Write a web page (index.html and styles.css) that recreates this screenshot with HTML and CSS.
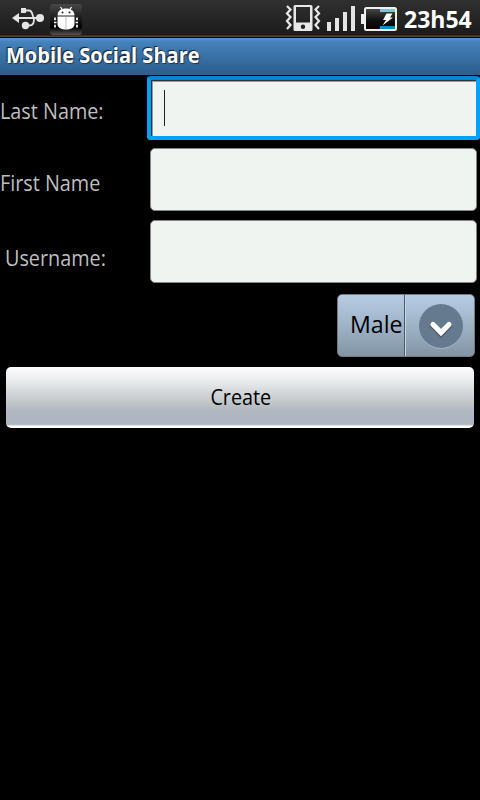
FILE: index.html
```html
<!DOCTYPE html>
<html lang="en">
<head>
<meta charset="utf-8">
<title>Mobile Social Share</title>
<link rel="stylesheet" href="styles.css">
</head>
<body>
<header class="status">
  <svg class="usb" width="34" height="26" viewBox="0 0 34 26" fill="#e4e4e4"><path d="M1 12l7-5v4h18v2H8v4z"/><circle cx="29" cy="12" r="4"/><path d="M10 2h5v5h-5z"/><circle cx="14.500" cy="19.500" r="3.700"/><path d="M14 4.500h4c4 0 3 6 5 7.500M15 19.500h3c5 0 5-4 5-7.500" fill="none" stroke="#e4e4e4" stroke-width="1.800"/></svg>
  <span class="debug"><svg width="32" height="31" viewBox="0 0 32 31" fill="#fff"><path d="M7.500 11.500C7.500 7 11 4.500 16 4.500s8.500 2.500 8.500 7z"/><path d="M10.500 3l2 3M21.500 3l-2 3" stroke="#fff" stroke-width="1.300"/><circle cx="12.500" cy="8.500" r="1" fill="#222"/><circle cx="19.500" cy="8.500" r="1" fill="#222"/><path d="M7.500 12.500h17V20c0 4-4 5.500-8.500 5.500S7.500 24 7.500 20z"/><path d="M16 13v12" stroke="#c0c0c0"/><path d="M5.800 15.500H5V13.500M6.500 18.500H4M5.800 21.500H5V23.500M26.200 15.500H27V13.500M25.500 18.500H28M26.200 21.500H27V23.500" fill="none" stroke="#fff" stroke-width="1.700"/></svg></span>
  <svg class="vibrate" width="36" height="28" viewBox="0 0 36 28"><path d="M2 2l3.500 3.500L2 9.500 5.500 13 2 17l3.500 4L2 25M34 2l-3.500 3.500L34 9.500 30.500 13l3.500 4-3.500 4 3.500 4" fill="none" stroke="#e8e8e8" stroke-width="2.200"/><path fill-rule="evenodd" fill="#e8e8e8" d="M10 1h16q1.500 0 1.500 1.500v23q0 1.500-1.500 1.500H10q-1.500 0-1.500-1.500v-23Q8.500 1 10 1zm1 2v15.500h14V3z"/><circle cx="18" cy="22.800" r="2.200" fill="#222"/></svg>
  <svg class="signal" width="29" height="26" viewBox="0 0 29 26" fill="#e4e4e4"><path d="M0 17h4v9H0zM8 13h4v13H8zM16 7h4v19h-4zM24 1h4v25h-4z"/></svg>
  <svg class="battery" width="37" height="25" viewBox="0 0 37 25"><defs><linearGradient id="g" x2="0" y2="1"><stop stop-color="#4b4b4b"/><stop offset=".55" stop-color="#111"/><stop offset="1" stop-color="#000"/></linearGradient></defs><rect x="4" y="1" width="31" height="22" rx="1.500" fill="url(#g)" stroke="#eee" stroke-width="2"/><path fill="#eee" d="M0 7h4v10H0z"/><path fill="#7cc3e6" d="M19 2h15v3H19z"/><path fill="#088bc8" d="M19 19h15v3H19z"/><path fill="#fff" d="M25.500 6.500h6l-2.500 4h3L21.500 18.500l3.500-5.500h-3z"/></svg>
  <span class="clock">23h54</span>
</header>
<h1 class="title"><span>Mobile Social Share</span></h1>
<main>
  <div class="row row-last"><label for="last"><span>Last Name:</span></label><div class="field focused"><i class="caret"></i><input id="last" type="text"></div></div>
  <div class="row row-first"><label for="first"><span>First Name</span></label><div class="field"><input id="first" type="text"></div></div>
  <div class="row row-user"><label for="user"><span>Username:</span></label><div class="field"><input id="user" type="text"></div></div>
  <button class="spinner"><span class="value"><span>Male</span></span><span class="arrow"><svg width="46" height="47" viewBox="0 0 46 47"><circle cx="23" cy="24" r="22" fill="#a2b6c8"/><circle cx="23" cy="23" r="22" fill="#65798f"/><path d="M15 23l8 8 8-8" fill="none" stroke="#4b5968" stroke-width="5.500" stroke-linecap="round"/><path d="M15 21.500l8 8 8-8" fill="none" stroke="#fff" stroke-width="5.200" stroke-linecap="round"/></svg></span></button>
  <button class="create"><span>Create</span></button>
</main>
</body>
</html>
```
FILE: styles.css
```css
* { box-sizing: border-box; }
body {
  margin: 0;
  min-height: 800px;
  background: #000;
  color: #bebebe;
  font-family: "Open Sans", "Noto Sans", sans-serif;
}
.status {
  display: flex;
  align-items: flex-start;
  height: 38px;
  border-bottom: 1px solid #000;
  background: linear-gradient(#303030, #1b1b1b 35px, #484848 36px, #484848 37px);
}
.usb { margin: 6px 0 0 11px; }
.debug {
  width: 32px;
  height: 31px;
  margin: 4px 0 0 5px;
  border-radius: 3px;
  background: linear-gradient(#484848, #000 75%, #555);
}
.debug svg { display: block; }
.vibrate { margin: 4px 0 0 203px; }
.signal { margin: 5px 0 0 6px; }
.battery { margin: 7px 0 0 5px; }
.clock {
  margin: 3px 0 0 6px;
  color: #fff;
  font: bold 23px/32px "Open Sans", sans-serif;
  white-space: nowrap;
}
.title {
  height: 37px;
  margin: 0;
  padding-left: 6px;
  background: linear-gradient(#5897d3, #4681ba 4px, #2c6090 34px, #315f8e);
  color: #fff;
  font-size: 21px;
  line-height: 35px;
  text-shadow: -1px -1px 1px #123, 1px 1px 1px #234;
}
.title span, label span, .value span, .create span {
  display: inline-block;
  transform: scaleX(.9);
  transform-origin: 0 50%;
  white-space: nowrap;
}
.title span { transform: scaleX(.953); }
main { display: flex; flex-direction: column; }
.row { display: flex; height: 72px; }
.row label {
  width: 147px;
  font-size: 22px;
  line-height: 70px;
}
.row-user { height: 75px; }
.row-user label { padding-left: 5px; line-height: 76px; }
.field {
  width: 327px;
  height: 63px;
  margin: 1px 0 0 3px;
  border: 1px solid #858585;
  border-radius: 5px;
  background: #f0f4f1;
}
.field input {
  width: 100%;
  height: 100%;
  border: 0;
  outline: 0;
  background: transparent;
  font-size: 21px;
}
.focused {
  display: flex;
  align-items: flex-start;
  width: 333px;
  height: 64px;
  margin: 1px 0 0;
  border: 4px solid #00a2fb;
  border-top-color: #0086d3;
  border-radius: 4px;
  box-shadow: inset 1px 1px #333, inset 2px 2px #999;
}
.caret { flex: none; width: 1px; height: 36px; margin: 10px 0 0 13px; background: #222; }
.focused input { flex: 1; width: 0; }
button { padding: 0; color: #000; font-family: inherit; }
.spinner {
  display: flex;
  align-self: flex-end;
  width: 138px;
  height: 63px;
  margin-right: 5px;
  border: 1px solid #77797b;
  border-radius: 5px;
  background: linear-gradient(#b6cce4, #a2b6ca 45%, #8295a5);
}
.value {
  width: 67px;
  height: 61px;
  padding-left: 12px;
  border-right: 1px solid #4e5964;
  font-size: 24px;
  line-height: 57px;
  text-align: left;
}
.value span { transform: scaleX(.965); }
.arrow { flex: 1; height: 61px; padding: 8px 0 0 12px; border-left: 1px solid #c8d7e6; }
.arrow svg { display: block; }
.create {
  height: 61px;
  margin: 10px 6px 0;
  padding: 0 0 2px 1px;
  border: 0;
  border-radius: 5px;
  background: linear-gradient(#fdfdfe, #eff0f2 18%, #c2c7c9 57%, #b1b7c1 72%, #aeb5c0 94%, #fff 97%);
  font-size: 22px;
  line-height: 59px;
}
.create span { transform-origin: 50% 50%; }
```
